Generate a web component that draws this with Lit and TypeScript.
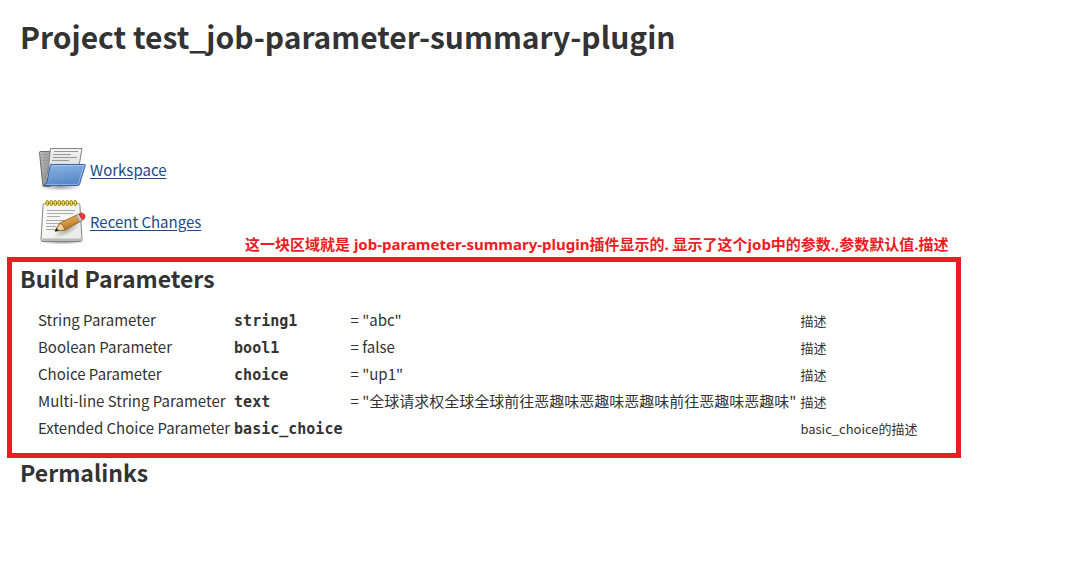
import { LitElement, html, css, svg } from "lit";
import { customElement } from "lit/decorators.js";

interface Parameter {
  type: string;
  name: string;
  value?: string;
  description: string;
}

const parameters: Parameter[] = [
  { type: "String Parameter", name: "string1", value: '"abc"', description: "描述" },
  { type: "Boolean Parameter", name: "bool1", value: "false", description: "描述" },
  { type: "Choice Parameter", name: "choice", value: '"up1"', description: "描述" },
  {
    type: "Multi-line String Parameter",
    name: "text",
    value: '"全球请求权全球全球前往恶趣味恶趣味恶趣味前往恶趣味恶趣味"',
    description: "描述",
  },
  { type: "Extended Choice Parameter", name: "basic_choice", description: "basic_choice的描述" },
];

const rings = [8, 12, 16, 20, 24, 28, 32, 36];

@customElement("folder-icon")
export class FolderIcon extends LitElement {
  static styles = css`
    :host,
    svg {
      display: block;
    }
  `;

  render() {
    return html`<svg width="48" height="48" viewBox="0 0 48 48" aria-hidden="true">
      <defs>
        <linearGradient id="front" x1="0" y1="0" x2="0.3" y2="1">
          <stop offset="0" stop-color="#8fb6e2" />
          <stop offset="1" stop-color="#5789c8" />
        </linearGradient>
        <linearGradient id="back" x1="0" y1="0" x2="1" y2="1">
          <stop offset="0" stop-color="#bdbdbd" />
          <stop offset="1" stop-color="#858585" />
        </linearGradient>
        <linearGradient id="sheet" x1="0" y1="0" x2="0" y2="1">
          <stop offset="0" stop-color="#f4f4f4" />
          <stop offset="1" stop-color="#cfcfcf" />
        </linearGradient>
        <radialGradient id="shade">
          <stop offset="0" stop-color="#000" stop-opacity="0.4" />
          <stop offset="1" stop-color="#000" stop-opacity="0" />
        </radialGradient>
      </defs>
      <ellipse cx="22" cy="40.500" rx="22" ry="4.500" fill="url(#shade)" />
      <path d="M1.500 6.500q0-1 1-1h9l1 2v33H6.500q-1.600 0-1.800-2z" fill="url(#back)" stroke="#6e6e6e" />
      <path d="M3.500 8.500h8M4 11.500h7M4 14.500h6M5 17.500h6" stroke="#999" />
      <path d="M12.500 2.500h31.500L39 32H7q3-3 3.300-9z" fill="url(#sheet)" stroke="#858585" />
      <path d="M16 5.500h24M15 8.500h18M15 11.500h24M14 14.500h17" stroke="#999" />
      <path d="M12.500 18.500h34q1 0 .7 1.200l-5.500 18q-.5 1.800-2 1.800H5.500q3-1 3.500-4z" fill="url(#front)" stroke="#3465a4" />
      <path d="M13.500 19.500h32.500l-5.200 17.200q-.4 1.800-1.500 1.800H8" fill="none" stroke="#fff" stroke-opacity="0.3" />
    </svg>`;
  }
}

@customElement("notepad-icon")
export class NotepadIcon extends LitElement {
  static styles = css`
    :host,
    svg {
      display: block;
    }
  `;

  render() {
    return html`<svg width="48" height="48" viewBox="0 0 48 48" aria-hidden="true">
      <defs>
        <linearGradient id="paper" x1="0" y1="0" x2="1" y2="1">
          <stop offset="0" stop-color="#ffffff" />
          <stop offset="1" stop-color="#e8e8e6" />
        </linearGradient>
        <linearGradient id="wood" x1="0" y1="0" x2="0.5" y2="1">
          <stop offset="0" stop-color="#f5cd96" />
          <stop offset="0.5" stop-color="#dc9d4c" />
          <stop offset="1" stop-color="#a3641b" />
        </linearGradient>
        <radialGradient id="shade">
          <stop offset="0" stop-color="#000" stop-opacity="0.5" />
          <stop offset="1" stop-color="#000" stop-opacity="0" />
        </radialGradient>
        <radialGradient id="cast">
          <stop offset="0" stop-color="#000" stop-opacity="0.3" />
          <stop offset="1" stop-color="#000" stop-opacity="0" />
        </radialGradient>
      </defs>
      <ellipse cx="24" cy="43.500" rx="23" ry="3" fill="url(#shade)" />
      <path d="M6.500 5.500h34q1.300 0 1.400 1.300l2.100 34.700q0 2-2 2H5q-2 0-2-2L5.100 7q0-1.500 1.400-1.500z" fill="url(#paper)" stroke="#858585" />
      <path d="M4 40.500h39v1.500q0 1-1 1H5q-1 0-1-1z" fill="#b9b9b6" />
      <path d="M9 12.500h28M9 15.500h26M9 18.500h13M8 22.500h25M8 25.500h14M8 28.500h10M8 31.500h8" stroke="#aaa" />
      <ellipse cx="29" cy="32" rx="15" ry="5" transform="rotate(-28 29 32)" fill="url(#cast)" />
      ${rings.map(
        (x) => svg`<rect x=${x} y="2.500" width="2.500" height="5" rx="1.200" fill="#f0d93c" stroke="#9a8410" />`,
      )}
      <path d="M17 33l5-8L40 16.500l4 6L27 32z" fill="url(#wood)" stroke="#8f5902" stroke-width="0.800" />
      <path d="M17 33l5-8q3.500 1.500 5 7z" fill="#efd3aa" stroke="#8f5902" stroke-width="0.800" />
      <path d="M16.500 33.500l2-3.600 2.300 2.500z" fill="#222" />
      <path d="M38 17.500l3-1.500 3.700 6-3 1.600z" fill="#c8c8c8" stroke="#888" stroke-width="0.600" />
      <path d="M41 16l1.800-.8q2.500-.4 3.800 1.600 1.200 2.200-.4 4l-1.700 1z" fill="#ef3b3b" stroke="#bb2020" stroke-width="0.800" />
    </svg>`;
  }
}

@customElement("app-root")
export class AppRoot extends LitElement {
  static styles = css`
    :host {
      display: block;
      padding: 16px 7px 32px;
      background: #fff;
      color: #333;
      font-family: "Noto Sans CJK SC", sans-serif;
      font-size: 15px;
      line-height: 22px;
    }
    h1,
    h2 {
      margin: 0;
      padding-left: 13px;
      font-weight: 700;
    }
    h1 {
      font-size: 30px;
      line-height: 40px;
    }
    h2 {
      font-size: 23px;
      line-height: 28px;
    }
    .links {
      display: flex;
      flex-direction: column;
      align-items: flex-start;
      gap: 4px;
      margin-top: 90px;
      padding-left: 31px;
    }
    .link {
      display: flex;
      align-items: center;
      gap: 4px;
      color: #204a87;
      text-underline-offset: 2px;
    }
    .annotated {
      display: flex;
      flex-direction: column;
      width: fit-content;
      margin-top: -13px;
    }
    .note {
      margin: 0;
      padding: 0 12px 2px 0;
      align-self: flex-end;
      color: #ed1c24;
      font-family: "Noto Sans", "Noto Sans CJK SC", sans-serif;
      font-weight: 700;
      line-height: 22px;
    }
    .highlight {
      border: 5px solid #ed1c24;
      padding: 2px 36px 9px 0;
    }
    .highlight h2 {
      padding-left: 8px;
    }
    table {
      margin: 17px 0 0 24px;
      border-spacing: 0;
    }
    td {
      height: 27px;
      padding: 0 2px;
      white-space: nowrap;
      vertical-align: baseline;
    }
    .name {
      font-family: "DejaVu Sans Mono", monospace;
      font-weight: 700;
    }
    .value {
      padding-left: 6px;
    }
    .description {
      font-size: 13px;
    }
  `;

  render() {
    return html`
      <main>
        <h1>Project test_job-parameter-summary-plugin</h1>
        <nav class="links">
          <a class="link" href="#workspace"><folder-icon></folder-icon><span>Workspace</span></a>
          <a class="link" href="#changes"><notepad-icon></notepad-icon><span>Recent Changes</span></a>
        </nav>
        <div class="annotated">
          <p class="note">
            这一块区域就是 job-parameter-summary-plugin插件显示的. 显示了这个job中的参数.,参数默认值.描述
          </p>
          <section class="highlight">
            <h2>Build Parameters</h2>
            <table aria-label="Build Parameters">
              <tbody>
                ${parameters.map(
                  (p) => html`<tr>
                    <td>${p.type}</td>
                    <td class="name">${p.name}</td>
                    <td class="value">${p.value ? `= ${p.value}` : ""}</td>
                    <td class="description">${p.description}</td>
                  </tr>`,
                )}
              </tbody>
            </table>
          </section>
        </div>
        <h2>Permalinks</h2>
      </main>
    `;
  }
}
